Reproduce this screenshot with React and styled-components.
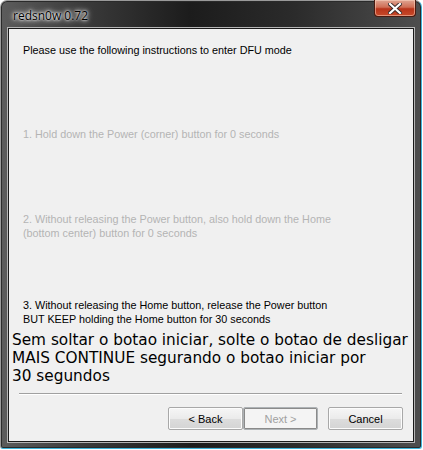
import React from 'react';
import styled, { createGlobalStyle } from 'styled-components';

const GlobalStyle = createGlobalStyle`
  html, body {
    margin: 0;
    padding: 0;
    background: #ffffff;
  }
`;

const Frame = styled.div`
  width: 422px;
  height: 449px;
  box-sizing: border-box;
  border-radius: 7px 7px 3px 3px;
  border: 1px solid #9a9a9a;
  border-right-color: #3fb4da;
  border-bottom-color: #3fb4da;
  background: linear-gradient(90deg, #5c5c5c 0%, #3a3a3a 20%, #1c1c1c 45%, #2b2b2b 70%, #4e4e4e 100%);
  box-shadow: inset 0 0 0 1px #2a2a2a;
  display: flex;
  flex-direction: column;
  padding: 0 6px 6px 6px;
`;

const TitleBar = styled.div`
  height: 27px;
  display: flex;
  align-items: flex-start;
  justify-content: space-between;
`;

const Title = styled.span`
  font-family: "Open Sans", "DejaVu Sans", sans-serif;
  font-size: 12px;
  color: #000;
  margin-top: 6px;
  margin-left: 1px;
  padding: 0 5px;
  text-shadow: 0 0 6px #fff, 0 0 4px #fff, 0 0 2px #fff;
`;

const CloseButton = styled.div`
  width: 42px;
  height: 17px;
  margin-top: -1px;
  margin-right: -1px;
  box-sizing: border-box;
  border: 1px solid #4a1a10;
  border-top: none;
  border-radius: 0 0 4px 4px;
  background: linear-gradient(180deg, #dfa592 0%, #cf6e55 45%, #b8341a 55%, #c84a2a 100%);
  box-shadow: inset 0 0 0 1px rgba(255, 220, 200, 0.5);
  display: flex;
  align-items: center;
  justify-content: center;
`;

const Client = styled.div`
  flex: 1;
  background: #f0f0f0;
  border: 1px solid #1a1a1a;
  outline: 1px solid #b5b5b5;
  display: flex;
  flex-direction: column;
  padding: 14px 0 0 0;
  margin-left: 1px;
  margin-right: 1px;
`;

const Line = styled.p`
  margin: 0;
  margin-top: ${({ $top }) => $top || 0}px;
  padding-left: 14px;
  font-family: "Liberation Sans", Arial, sans-serif;
  font-size: 10.8px;
  line-height: 14px;
  color: ${({ $dim }) => ($dim ? '#b4b4b4' : '#000')};
`;

const BigText = styled.p`
  margin: 5px 0 0 0;
  padding-left: 3px;
  font-family: "DejaVu Sans", Verdana, sans-serif;
  font-size: 15.3px;
  line-height: 18px;
  color: #000;
  white-space: nowrap;
`;

const Separator = styled.div`
  height: 1px;
  background: #a0a0a0;
  border-bottom: 1px solid #ffffff;
  margin: 8px 11px 0 10px;
`;

const ButtonRow = styled.div`
  display: flex;
  justify-content: flex-end;
  margin-top: 12px;
  padding-right: 10px;
`;

const Button = styled.div`
  width: 75px;
  height: 23px;
  box-sizing: border-box;
  margin-left: ${({ $gap }) => $gap || 0}px;
  border: 1px solid ${({ $focused }) => ($focused ? '#707070' : '#a8a8a8')};
  border-radius: 2px;
  background: linear-gradient(180deg, #f6f6f6 0%, #ebebeb 50%, #dddddd 51%, #d4d4d4 100%);
  box-shadow: inset 0 0 0 1px ${({ $focused }) => ($focused ? '#b8b8b8' : '#fcfcfc')};
  display: flex;
  align-items: center;
  justify-content: center;
  font-family: "Liberation Sans", Arial, sans-serif;
  font-size: 11px;
  color: ${({ $disabled }) => ($disabled ? '#a0a0a0' : '#000')};
`;

const DisabledButton = styled(Button)`
  background: #f4f4f4;
  border: 1px solid #adb2b5;
  box-shadow: inset 0 0 0 1px #8a8a8a;
`;

const App = () => {
  return (
    <>
      <GlobalStyle />
      <Frame>
        <TitleBar>
          <Title>redsn0w 0.72</Title>
          <CloseButton>
            <svg width="14" height="11" viewBox="0 0 14 11">
              <path
                d="M2 1 L12 10 M12 1 L2 10"
                stroke="#3a2a28"
                strokeWidth="4"
                strokeLinecap="square"
              />
              <path
                d="M2 1 L12 10 M12 1 L2 10"
                stroke="#ffffff"
                strokeWidth="2.2"
                strokeLinecap="square"
              />
            </svg>
          </CloseButton>
        </TitleBar>
        <Client>
          <Line>Please use the following instructions to enter DFU mode</Line>
          <Line $dim $top={70}>1. Hold down the Power (corner) button for 0 seconds</Line>
          <Line $dim $top={71}>2. Without releasing the Power button, also hold down the Home</Line>
          <Line $dim>(bottom center) button for 0 seconds</Line>
          <Line $top={58}>3. Without releasing the Home button, release the Power button</Line>
          <Line>BUT KEEP holding the Home button for 30 seconds</Line>
          <BigText>
            Sem soltar o botao iniciar, solte o botao de desligar
            <br />
            MAIS CONTINUE segurando o botao iniciar por
            <br />
            30 segundos
          </BigText>
          <Separator />
          <ButtonRow>
            <Button>&lt; Back</Button>
            <DisabledButton $disabled>Next &gt;</DisabledButton>
            <Button $gap={10}>Cancel</Button>
          </ButtonRow>
        </Client>
      </Frame>
    </>
  );
};

export default App;
